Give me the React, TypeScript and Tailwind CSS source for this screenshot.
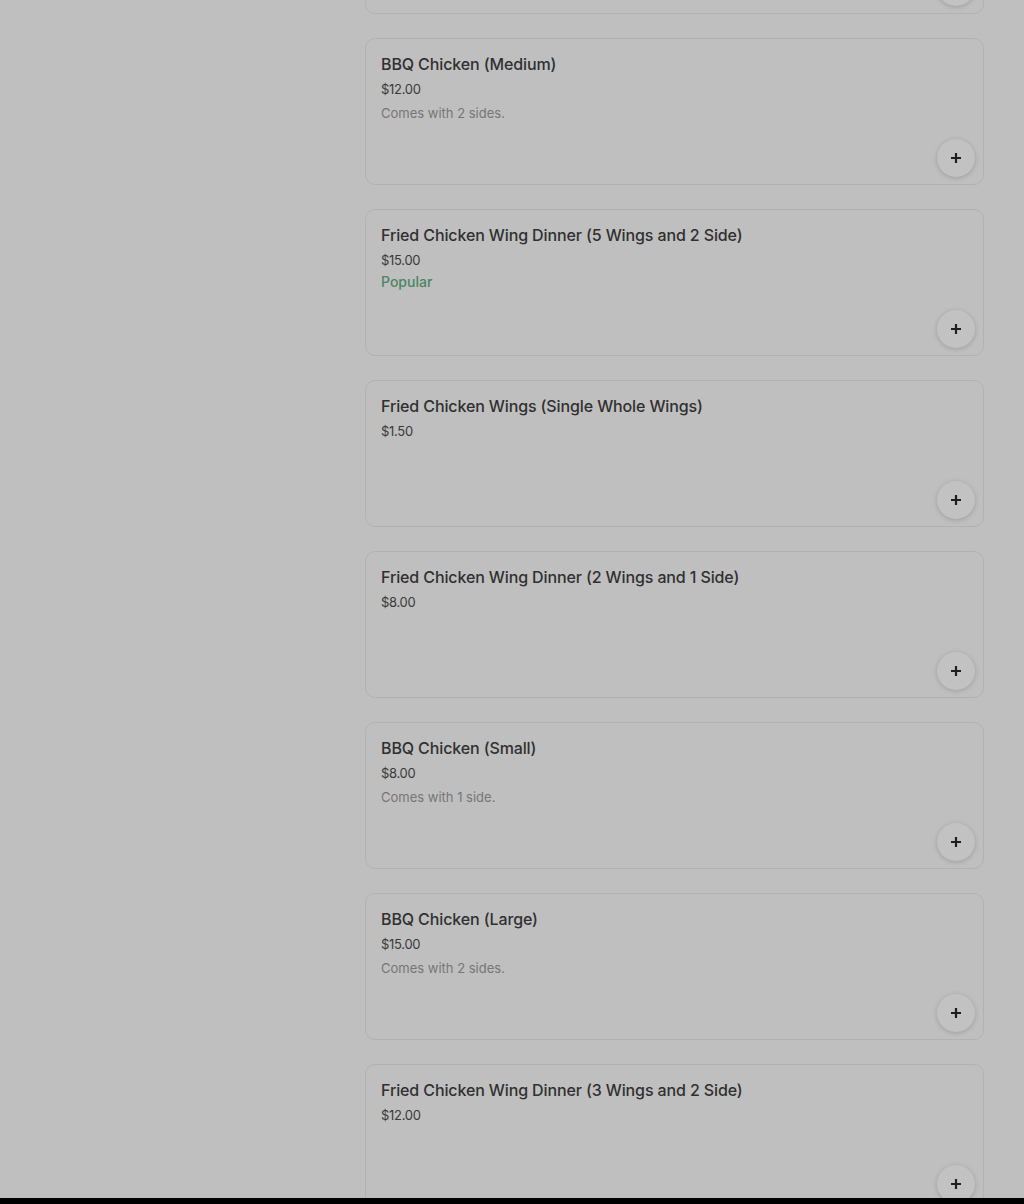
import React from "react";

type Item = { name: string; price: string; desc?: string; popular?: boolean; hidden?: boolean };

const items: Item[] = [
  { name: "", price: "", hidden: true },
  { name: "BBQ Chicken (Medium)", price: "$12.00", desc: "Comes with 2 sides." },
  { name: "Fried Chicken Wing Dinner (5 Wings and 2 Side)", price: "$15.00", popular: true },
  { name: "Fried Chicken Wings (Single Whole Wings)", price: "$1.50" },
  { name: "Fried Chicken Wing Dinner (2 Wings and 1 Side)", price: "$8.00" },
  { name: "BBQ Chicken (Small)", price: "$8.00", desc: "Comes with 1 side." },
  { name: "BBQ Chicken (Large)", price: "$15.00", desc: "Comes with 2 sides." },
  { name: "Fried Chicken Wing Dinner (3 Wings and 2 Side)", price: "$12.00" },
];

function Card({ item }: { item: Item }) {
  return (
    <div className="relative h-[147px] rounded-[10px] border border-[#b2b2b2] bg-[#bfbfbf] px-[15px] pt-[13px]">
      {!item.hidden && (
        <>
          <div className="text-[16px] leading-[24px] font-medium text-[#303030] tracking-[-0.12px]">{item.name}</div>
          <div className="mt-[3px] text-[13px] leading-[20px] text-[#3a3a3a] tracking-[-0.3px]">{item.price}</div>
          {item.desc && (
            <div className="mt-[4px] text-[13px] leading-[20px] text-[#767676]">{item.desc}</div>
          )}
          {item.popular && (
            <div className="mt-[2px] text-[14px] leading-[20px] font-medium text-[#4b8466]">Popular</div>
          )}
        </>
      )}
      <button className="absolute right-[8px] bottom-[7px] flex h-[38px] w-[38px] items-center justify-center rounded-full bg-[#c2c2c2] shadow-[0_1px_5px_rgba(0,0,0,0.18)]">
        <svg width="12" height="12" viewBox="0 0 12 12">
          <path d="M6 1v10M1 6h10" stroke="#1f1f1f" strokeWidth="2.2" />
        </svg>
      </button>
    </div>
  );
}

export default function App() {
  return (
    <div
      className="min-h-[1204px] w-full overflow-hidden bg-[#bfbfbf]"
      style={{ fontFamily: "Inter, 'Noto Sans', sans-serif" }}
    >
      <div className="ml-[365px] mt-[-133px] flex w-[619px] flex-col gap-[24px]">
        {items.map((it, i) => (
          <Card key={i} item={it} />
        ))}
      </div>
      <div className="fixed bottom-0 left-0 h-[6px] w-full bg-black" />
    </div>
  );
}
